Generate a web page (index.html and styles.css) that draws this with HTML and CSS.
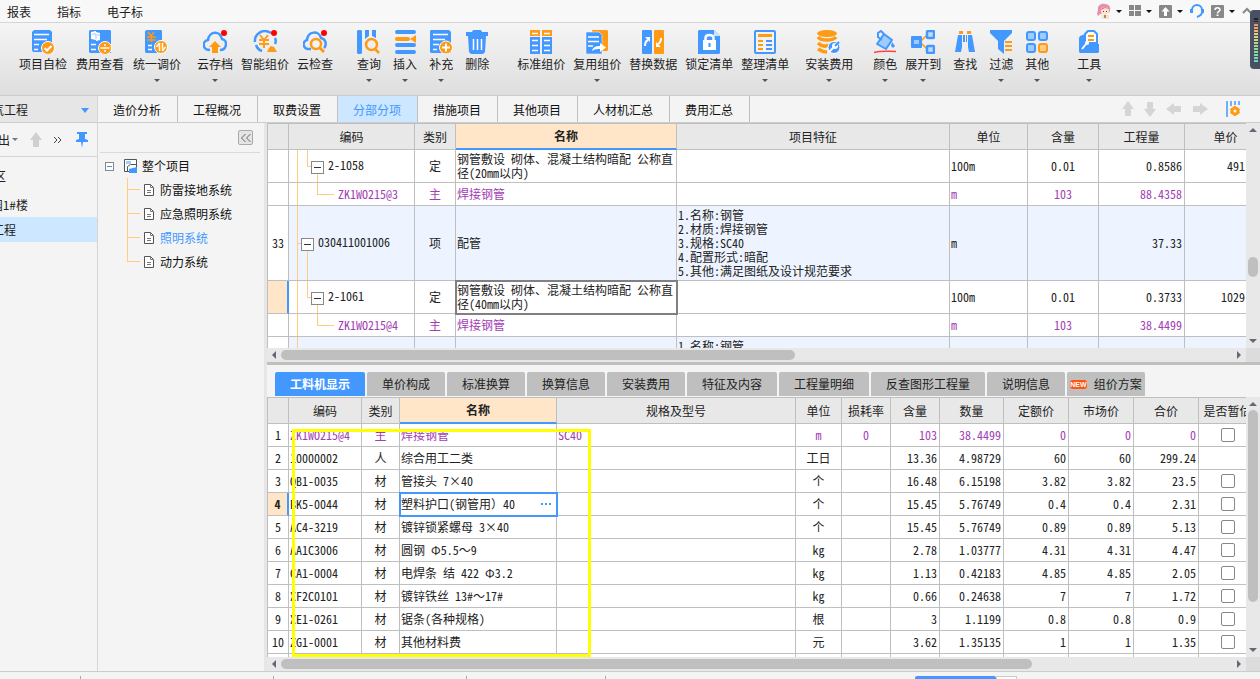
FILE: index.html
```html
<!DOCTYPE html>
<html lang="zh-CN">

<head>
  <meta charset="UTF-8" />
  <meta name="viewport" content="width=device-width, initial-scale=1.0" />
  <title>工程计价 - 分部分项</title>
  <link rel="stylesheet" href="styles.css">
</head>

<body>
  <header class="menubar">
    <nav class="menus">
      <a href="#">报表</a>
      <a href="#">指标</a>
      <a href="#">电子标</a>
    </nav>
    <div class="sysbar">
      <button class="sys drop" aria-label="用户">
        <svg width="14" height="16" viewBox="0 0 14 16"><path d="M1 7C0 3 4 0 8 1c4 0 6 3 5 7l-1 2-9 1-2 2-1-2z" fill="#e98fae" /><circle cx="8" cy="8" r="4" fill="#fbe3cf" /><path d="M4 7c1-3 5-4 8-1l-4-1z" fill="#d9708f" /><path d="M6 8h1v1H6zM9 8h1v1H9z" fill="#633" /><path d="M4 12h8v4H5z" fill="#efe6d8" /><path d="M7 12h2v3H7z" fill="#b88858" /></svg>
      </button>
      <button class="sys drop" aria-label="窗口布局">
        <svg width="12" height="12" viewBox="0 0 12 12" fill="#888"><path d="M0 0h5v5H0zM6 0h6v5H6zM0 6h5v5H0zM6 6h6v5H6z" /></svg>
      </button>
      <button class="sys drop" aria-label="上传">
        <svg width="13" height="13" viewBox="0 0 13 13"><rect width="13" height="13" rx="1" fill="#888" /><path d="M6.500 2l4 4.500H8V11H5V6.500H2.500z" fill="#fff" /></svg>
      </button>
      <button class="sys" aria-label="客服">
        <svg width="14" height="14" viewBox="0 0 14 14" fill="none" stroke="#4398ff" stroke-width="2"><path d="M2 8V6a5 5 0 0 1 10 0v2c0 3-2 4-5 5" /><path d="M1.500 5v4M12.500 5v4" stroke-width="3" /></svg>
      </button>
      <button class="sys drop" aria-label="帮助">
        <svg width="13" height="13" viewBox="0 0 13 13"><rect width="13" height="13" rx="1" fill="#888" /><path d="M4 5c0-3 5-3 5 0 0 1.500-2.500 1.500-2.500 3.500" fill="none" stroke="#fff" stroke-width="1.500" /><path d="M5.500 9.500h2v1.500h-2z" fill="#fff" /></svg>
      </button>
      <button class="sys" aria-label="收起">
        <svg width="10" height="8" viewBox="0 0 10 8" fill="none" stroke="#888" stroke-width="2"><path d="M1 6l4-4 4 4" /></svg>
      </button>
    </div>
  </header>

  <section class="toolbar">
    <div class="group">
      <button class="tool"><svg class="icon" viewBox="0 0 24 24"><path fill="#4398ff" d="M3 0h16l2 2v20H2l-1-2V2z" /><path stroke="#fff" stroke-width="1.500" d="M3 4.500h15M3 9.500h13M3 14.500h5M3 19.500h4" /><circle cx="17" cy="18" r="6.500" fill="#ff9a14" stroke="#fff" /><path d="M13.500 18l2.500 2.500 4.500-4.500" fill="none" stroke="#fff" stroke-width="2" /></svg>项目自检</button>
      <button class="tool"><svg class="icon" viewBox="0 0 24 24"><path fill="#4398ff" d="M2 0h20l1 1v22H2l-1-1V1z" /><path fill="#fff" d="M3 2l5-1v1l4 1v7l-4 1v-1l-5-1z" /><path d="M4 4h4v5M9 5h3" fill="none" stroke="#9fccff" /><path stroke="#fff" stroke-width="1.500" d="M3 14.500h5M3 19.500h5" /><circle cx="17" cy="18" r="6.500" fill="#ff9a14" stroke="#fff" /><path d="M12.500 18h9" stroke="#fff" stroke-width="1.500" /><circle cx="17" cy="15" r="1" fill="#fff" /><circle cx="17" cy="21" r="1" fill="#fff" /></svg>费用查看</button>
      <button class="tool drop"><svg class="icon" viewBox="0 0 24 24"><path fill="#4398ff" d="M2 0h14l1 1v22H1l-1-1V1z" /><path d="M3 2l3 4 3-4M2 7h9M2 10h9M6.500 6v6" fill="none" stroke="#ff9a14" stroke-width="1.500" /><path stroke="#fff" stroke-width="1.500" d="M3 15.500h4M3 19.500h4" /><circle cx="16" cy="17" r="6.500" fill="#ff9a14" stroke="#fff" /><path d="M14.500 13v8M17.500 13v8M14.500 13l-3 4M17.500 21l3-4" fill="none" stroke="#fff" stroke-width="1.500" /></svg>统一调价</button>
    </div>
    <div class="group sp16 tight">
      <button class="tool drop"><svg class="icon" viewBox="0 0 24 24"><path d="M7 20C-1 20-1 11 5 10 6 1 17 0 19 9c6 1 5 11-2 11" fill="none" stroke="#4398ff" stroke-width="2.500" /><path fill="#ff9a14" d="M12 11l6 6h-3v6H9v-6H6z" /><circle cx="21" cy="3" r="3" fill="#f00" /></svg>云存档</button>
      <button class="tool"><svg class="icon" viewBox="0 0 24 24"><path d="M18 3C10-2 1 4 2 12M3 15c1 3 3 5 6 6M22 8c1 2 1 4 0 6" fill="none" stroke="#4398ff" stroke-width="2.500" /><path d="M7 5l4 5 4-5M6 10h10M6 14h10M11 9v9" fill="none" stroke="#ff9a14" stroke-width="2" /><path fill="#ff9a14" d="M14 22l2-4 2-2 3 1 3 5z" /><circle cx="21" cy="3" r="3" fill="#f00" /></svg>智能组价</button>
      <button class="tool"><svg class="icon" viewBox="0 0 24 24"><path d="M8 19C-1 20-1 11 4 10 5 1 16 0 18 8c5 1 6 7 3 10" fill="none" stroke="#4398ff" stroke-width="2.500" /><circle cx="13" cy="14" r="5" fill="#f3f3f3" stroke="#ff9a14" stroke-width="2.500" /><path d="M17 18l4 4" stroke="#ff9a14" stroke-width="3" /><circle cx="21" cy="3" r="3" fill="#f00" /></svg>云检查</button>
    </div>
    <div class="group sp24 wide">
      <button class="tool drop"><svg class="icon" viewBox="0 0 24 24"><path fill="#4398ff" d="M0 1l1-1h3l1 1v22l-1 1H1l-1-1zM8 0h4v6L8 9zM15 0h4v8l-4-2z" /><circle cx="14.500" cy="14.500" r="5.500" fill="none" stroke="#ff9a14" stroke-width="2.500" /><path d="M18 19l4 4" stroke="#ff9a14" stroke-width="2.500" /></svg>查询</button>
      <button class="tool drop"><svg class="icon" viewBox="0 0 24 24"><path stroke="#4398ff" stroke-width="4" stroke-linecap="round" d="M4 2h17M4 15h17M4 22h17" /><path stroke="#ff9a14" stroke-width="4" stroke-linecap="round" d="M4 9h11" /><path fill="#ff9a14" d="M23 5v8l-6-4z" /></svg>插入</button>
      <button class="tool drop"><svg class="icon" viewBox="0 0 24 24"><path fill="#4398ff" d="M2 0h18l2 2v21H2l-1-1V1z" /><path stroke="#fff" stroke-width="1.500" d="M4 4.500h15M4 9.500h12M4 14.500h6M4 19.500h4" /><circle cx="17" cy="17.500" r="6.500" fill="#ff9a14" stroke="#fff" /><path d="M13 17.500h8M17 13.500v8" stroke="#fff" stroke-width="2" /></svg>补充</button>
      <button class="tool"><svg class="icon" viewBox="0 0 24 24"><path fill="#4398ff" d="M8 0h8l1 2h6v4H1V2h6zM3 6h18l-1 16-2 2H6l-2-2z" /><path stroke="#fff" stroke-width="1.500" d="M8.500 9v11M12.500 9v11M16.500 9v11" /></svg>删除</button>
    </div>
    <div class="group sp28 tight">
      <button class="tool"><svg class="icon" viewBox="0 0 24 24"><path fill="#ff9a14" d="M1 0h10v6H1zM13 0h10v6H13z" /><path fill="#4398ff" d="M1 7h10v17H1zM13 7h10v17H13z" /><path stroke="#fff" stroke-width="1.500" d="M3 3.500h6M15 3.500h6M3 10.500h6M15 10.500h6M3 15.500h6M15 15.500h6M3 20.500h6M15 20.500h6" /></svg>标准组价</button>
      <button class="tool drop"><svg class="icon" viewBox="0 0 24 24"><path fill="#ff9a14" d="M7 0h15l1 1v19l-1 1H10z" /><path fill="#4398ff" stroke="#fff" stroke-width=".5" d="M1 2h13l3 3v19H1z" /><path stroke="#fff" stroke-width="1.500" d="M3 7h11M3 11.500h11M3 16h5" /><path fill="#fff" d="M7 21c1-4 4-5 8-5v-3l6 4.500-6 4.500v-3c-3 0-5 0-8 2z" /></svg>复用组价</button>
      <button class="tool"><svg class="icon" viewBox="0 0 24 24"><rect x="1" width="10" height="24" rx="1" fill="#4398ff" /><rect x="13" width="10" height="24" rx="1" fill="#ff9a14" /><path d="M4 16c0-3 1-5 3-6M20 8c0 3-1 5-3 6" fill="none" stroke="#fff" stroke-width="2" /><path fill="#fff" d="M4 7h5v5zM20 17h-5v-5z" /></svg>替换数据</button>
      <button class="tool"><svg class="icon" viewBox="0 0 24 24"><path fill="#4398ff" d="M1 1l1-1h15l6 6v17l-1 1H1z" /><path fill="#cfe5ff" d="M17 0l6 6h-6z" /><path fill="#fff" d="M6 10h13v10H6z" /><path d="M8.500 11V8c0-4 8-4 8 0v3" fill="none" stroke="#fff" stroke-width="2.500" /><path stroke="#4398ff" stroke-width="2" d="M12.500 13v4" /></svg>锁定清单</button>
      <button class="tool drop"><svg class="icon" viewBox="0 0 24 24"><rect x="2" y="1" width="20" height="22" rx="1" fill="#f3f3f3" stroke="#4398ff" stroke-width="2" /><path stroke="#ff9a14" stroke-width="3" d="M5 5.500h14" /><path stroke="#ff9a14" stroke-width="2" d="M5 11h5M5 15h5M5 19h5" /><path stroke="#4398ff" stroke-width="2" d="M13 11h6M13 15h6M13 19h6" /></svg>整理清单</button>
    </div>
    <div class="group sp16">
      <button class="tool drop"><svg class="icon" viewBox="0 0 24 24"><ellipse cx="10" cy="3.500" rx="10" ry="3.500" fill="#ff9a14" /><path d="M1 7c3 4 15 4 18 0M1 13c3 3 7 4 11 2M1 19c3 2 5 3 9 3" fill="none" stroke="#ff9a14" stroke-width="3.500" /><circle cx="17" cy="17.500" r="6" fill="#4398ff" stroke="#fff" /><path d="M12 22l5-5" stroke="#fff" stroke-width="2" /><circle cx="18" cy="16" r="3" fill="#fff" /><path d="M18 16l4-4" stroke="#4398ff" stroke-width="2" /></svg>安装费用</button>
    </div>
    <div class="group sp20 tight">
      <button class="tool drop"><svg class="icon" viewBox="0 0 24 24"><path fill="#9fccff" stroke="#4398ff" stroke-width="2" stroke-linejoin="round" d="M11 4l8 6-6 9-9-5z" /><path d="M9 10L5 7V3l3-2 3 3" fill="none" stroke="#4398ff" stroke-width="2" /><path fill="#4398ff" d="M19 12l3 4-2 2-2-2z" /><path d="M1 22.500c7-2 14-1 22-1" fill="none" stroke="#f44" stroke-width="1.500" /></svg>颜色</button>
      <button class="tool drop"><svg class="icon" viewBox="0 0 24 24"><path d="M9 12l7-7M9 12l7 7" stroke="#ff9a14" stroke-width="1.500" /><rect x="0" y="6" width="11" height="12" rx="1" fill="#4398ff" /><path d="M3 10h5v4H3z" fill="#9fccff" /><rect x="16" y="1" width="7" height="7" rx="1" fill="#bddcff" stroke="#4398ff" stroke-width="2.500" /><rect x="16" y="16" width="7" height="7" rx="1" fill="#bddcff" stroke="#4398ff" stroke-width="2.500" /></svg>展开到</button>
    </div>
    <div class="group sp12 wide">
      <button class="tool"><svg class="icon" viewBox="0 0 24 24"><path fill="#ff9a14" d="M6 1h4v3H6zM14 1h4v3h-4z" /><path fill="#4398ff" d="M5 5h4v12l-1 5H2zM15 5h4l3 17h-6l-1-5zM10 5h2v7h-2zM13 5h1v7h-1z" /></svg>查找</button>
      <button class="tool drop"><svg class="icon" viewBox="0 0 24 24"><path fill="#4398ff" d="M1 0h22v3l-8 8v13l-6-5v-8L1 3z" /><path stroke="#ff9a14" stroke-width="2" d="M16 12h7M16 16h7M16 20h7" /></svg>过滤</button>
      <button class="tool drop"><svg class="icon" viewBox="0 0 24 24" fill="#9fccff" stroke="#4398ff" stroke-width="2"><rect x="2" y="2" width="8" height="8" rx="2" /><rect x="14" y="2" width="8" height="8" rx="2" /><rect x="2" y="14" width="8" height="8" rx="2" /><rect x="14" y="14" width="8" height="8" rx="2" fill="#ffcf8a" stroke="#ff9a14" /></svg>其他</button>
    </div>
    <div class="group sp28">
      <button class="tool drop"><svg class="icon" viewBox="0 0 24 24"><path d="M8 10V4l3-3h6l3 3v9H8z" fill="#fff" stroke="#4398ff" stroke-width="2" /><path stroke="#ff9a14" stroke-width="2" d="M11 6h6M11 10h6" /><path fill="#4398ff" d="M3 6l5-2v8h5l1 2h8v8l-1 1H3l-1-1V8z" /><path d="M5 19l4-5" fill="none" stroke="#fff" stroke-width="2" /><circle cx="10" cy="13" r="2" fill="#fff" /></svg>工具</button>
    </div>
  </section>

  <main class="workspace">
    <aside class="projects">
      <button class="project-pick"><span class="cut w28">电气工程</span><span class="tri"></span></button>
      <div class="project-tools">
        <button class="cut w10">导出</button>
        <span class="mini"></span>
        <svg width="12" height="16" viewBox="0 0 12 16" fill="#d0d0d0"><path d="M6 0l6 8H9v7H3V8H0z" /></svg>
        <button class="more" aria-label="更多"><svg width="8" height="8" viewBox="0 0 8 8" fill="none" stroke="#444"><path d="M0 1l3 3-3 3M4 1l3 3-3 3" /></svg></button>
        <svg class="pin" width="12" height="16" viewBox="0 0 12 16" fill="#4398ff"><path d="M1 0h10v2H9v5l3 1v2H7l-1 6-1-6H0V8l3-1V2H1z" /></svg>
      </div>
      <ul class="project-list">
        <li><span class="cut w6">小区</span></li>
        <li><span class="cut w28">花园1#楼</span></li>
        <li class="on"><span class="cut w16">电气工程</span></li>
      </ul>
    </aside>

    <div class="right">
      <nav class="tabs">
        <button>造价分析</button>
        <button>工程概况</button>
        <button>取费设置</button>
        <button class="on">分部分项</button>
        <button>措施项目</button>
        <button>其他项目</button>
        <button>人材机汇总</button>
        <button>费用汇总</button>
        <div class="moves">
          <svg width="12" height="16" viewBox="0 0 12 16"><path d="M6 0l6 8H9v7H3V8H0z" /></svg>
          <svg width="12" height="16" viewBox="0 0 12 16"><path d="M6 16l6-8H9V1H3v7H0z" /></svg>
          <svg width="16" height="12" viewBox="0 0 16 12"><path d="M0 6l8-6v3h7v6H8v3z" /></svg>
          <svg width="16" height="12" viewBox="0 0 16 12"><path d="M16 6l-8-6v3H1v6h7v3z" /></svg>
          <svg class="setup" width="14" height="16" viewBox="0 0 14 16"><path stroke="#4398ff" stroke-width="1.500" d="M1 0v16M5 0v5M9 0v4M13 0v4" /><circle cx="9" cy="10" r="3" fill="none" stroke="#ff9a14" stroke-width="3" /><path stroke="#ff9a14" stroke-width="2" d="M9 5v2M9 13v2M4.500 8l2 1M13.500 8l-2 1M4.500 12l2-1M13.500 12l-2-1" /></svg>
        </div>
      </nav>

      <div class="panes">
        <aside class="tree">
          <div class="tree-head"><button class="fold" aria-label="折叠"><svg width="10" height="10" viewBox="0 0 10 10" fill="none" stroke="#666"><path d="M4.500 1l-4 4 4 4M9.500 1l-4 4 4 4" /></svg></button></div>
          <div class="root">
            <button class="box" aria-label="收起"></button>
            <svg width="14" height="14" viewBox="0 0 14 14"><path d="M.5.500h12v12h-12z" fill="#fff" stroke="#555" /><path d="M2 2h5v3H2z" fill="#9fccff" /><path d="M3.500 13V7.500l3-2H12" fill="none" stroke="#555" /><path d="M5 14v-4l8-2v6z" fill="#4398ff" /></svg>
            整个项目
          </div>
          <ul>
            <li><svg class="doc" viewBox="0 0 10 12"><path d="M.5.500h6l3 3v8h-9z" fill="#fff" stroke="#555" /><path d="M6.500.500v3h3M3 6.500h4M3 8.500h4" fill="none" stroke="#777" /></svg>防雷接地系统</li>
            <li><svg class="doc" viewBox="0 0 10 12"><path d="M.5.500h6l3 3v8h-9z" fill="#fff" stroke="#555" /><path d="M6.500.500v3h3M3 6.500h4M3 8.500h4" fill="none" stroke="#777" /></svg>应急照明系统</li>
            <li class="on"><svg class="doc" viewBox="0 0 10 12"><path d="M.5.500h6l3 3v8h-9z" fill="#fff" stroke="#555" /><path d="M6.500.500v3h3M3 6.500h4M3 8.500h4" fill="none" stroke="#777" /></svg>照明系统</li>
            <li><svg class="doc" viewBox="0 0 10 12"><path d="M.5.500h6l3 3v8h-9z" fill="#fff" stroke="#555" /><path d="M6.500.500v3h3M3 6.500h4M3 8.500h4" fill="none" stroke="#777" /></svg>动力系统</li>
          </ul>
        </aside>

        <div class="grids">
          <!-- 分部分项清单 -->
          <section class="grid grid-top">
            <div class="view">
              <table class="list">
                <colgroup>
                  <col class="c21"><col class="c126"><col class="c41"><col class="c221"><col class="c273"><col class="c78"><col class="c71"><col class="c86"><col class="c82">
                </colgroup>
                <thead>
                  <tr><th></th><th>编码</th><th>类别</th><th class="key">名称</th><th>项目特征</th><th>单位</th><th>含量</th><th>工程量</th><th>单价</th></tr>
                </thead>
                <tbody>
                  <tr class="two">
                    <td></td><td class="lv2"><button class="minus" aria-label="收起"></button>2-1058</td><td class="c">定</td><td>钢管敷设 砌体、混凝土结构暗配 公称直径(20mm以内)</td><td></td><td>100m</td><td class="c">0.01</td><td class="r">0.8586</td><td class="r edge">491</td>
                  </tr>
                  <tr class="main">
                    <td></td><td class="lv3">ZK1WO215@3</td><td class="c">主</td><td>焊接钢管</td><td></td><td>m</td><td class="c">103</td><td class="r">88.4358</td><td></td>
                  </tr>
                  <tr class="item">
                    <td class="c">33</td><td class="lv1"><button class="minus" aria-label="收起"></button>030411001006</td><td class="c">项</td><td>配管</td><td>1.名称:钢管<br>2.材质:焊接钢管<br>3.规格:SC40<br>4.配置形式:暗配<br>5.其他:满足图纸及设计规范要求</td><td>m</td><td></td><td class="r">37.33</td><td></td>
                  </tr>
                  <tr class="two">
                    <td class="cur"></td><td class="lv2"><button class="minus" aria-label="收起"></button>2-1061</td><td class="c">定</td><td class="picked">钢管敷设 砌体、混凝土结构暗配 公称直径(40mm以内)</td><td></td><td>100m</td><td class="c">0.01</td><td class="r">0.3733</td><td class="r edge">1029</td>
                  </tr>
                  <tr class="main">
                    <td></td><td class="lv3">ZK1WO215@4</td><td class="c">主</td><td>焊接钢管</td><td></td><td>m</td><td class="c">103</td><td class="r">38.4499</td><td></td>
                  </tr>
                  <tr class="item">
                    <td></td><td class="lv0"></td><td></td><td></td><td>1.名称:钢管<br>2.材质:焊接钢管<br>3.规格:SC50<br>4.配置形式:暗配<br>5.其他:满足图纸及设计规范要求</td><td></td><td></td><td></td><td></td>
                  </tr>
                </tbody>
              </table>
            </div>
            <div class="vbar"><i class="up"></i><div class="track"><b class="mid"></b></div><i class="down"></i></div>
            <div class="hbar"><i class="left"></i><div class="track"><b class="w55"></b></div><i class="next"></i></div>
            <div class="corner"></div>
          </section>

          <!-- 工料机 -->
          <section class="detail">
            <nav class="subtabs">
              <button class="on w90">工料机显示</button>
              <button>单价构成</button>
              <button>标准换算</button>
              <button>换算信息</button>
              <button>安装费用</button>
              <button class="w90">特征及内容</button>
              <button class="w90">工程量明细</button>
              <button class="w114">反查图形工程量</button>
              <button>说明信息</button>
              <button><span class="new">NEW</span>组价方案</button>
            </nav>
            <div class="grid">
              <div class="view">
                <table class="list res">
                  <colgroup>
                    <col class="c21"><col class="c73"><col class="c38"><col class="c157"><col class="c239"><col class="c46"><col class="c49"><col class="c49"><col class="c64"><col class="c65"><col class="c65"><col class="c65"><col class="c58">
                  </colgroup>
                  <thead>
                    <tr><th></th><th>编码</th><th>类别</th><th class="key">名称</th><th>规格及型号</th><th>单位</th><th>损耗率</th><th>含量</th><th>数量</th><th>定额价</th><th>市场价</th><th>合价</th><th>是否暂估</th></tr>
                  </thead>
                  <tbody>
                    <tr class="main"><td>1</td><td>ZK1WO215@4</td><td>主</td><td>焊接钢管</td><td>SC40</td><td>m</td><td>0</td><td>103</td><td>38.4499</td><td>0</td><td>0</td><td>0</td><td><input type="checkbox" aria-label="暂估 1"></td></tr>
                    <tr><td>2</td><td>10000002</td><td>人</td><td>综合用工二类</td><td></td><td>工日</td><td></td><td>13.36</td><td>4.98729</td><td>60</td><td>60</td><td>299.24</td><td></td></tr>
                    <tr><td>3</td><td>QB1-0035</td><td>材</td><td>管接头 7×40</td><td></td><td>个</td><td></td><td>16.48</td><td>6.15198</td><td>3.82</td><td>3.82</td><td>23.5</td><td><input type="checkbox" aria-label="暂估 3"></td></tr>
                    <tr><td class="cur">4</td><td>BK5-0044</td><td>材</td><td class="edit"><div><span>塑料护口(钢管用<span class="full">）</span>40</span><button aria-label="选择"><svg width="11" height="2" viewBox="0 0 11 2" fill="#4398ff"><path d="M0 0h2v2H0zM4 0h2v2H4zM8 0h2v2H8z" /></svg></button></div></td><td></td><td>个</td><td></td><td>15.45</td><td>5.76749</td><td>0.4</td><td>0.4</td><td>2.31</td><td><input type="checkbox" aria-label="暂估 4"></td></tr>
                    <tr><td>5</td><td>AC4-3219</td><td>材</td><td>镀锌锁紧螺母 3×40</td><td></td><td>个</td><td></td><td>15.45</td><td>5.76749</td><td>0.89</td><td>0.89</td><td>5.13</td><td><input type="checkbox" aria-label="暂估 5"></td></tr>
                    <tr><td>6</td><td>AA1C3006</td><td>材</td><td>圆钢 Φ5.5<span class="full">～</span>9</td><td></td><td>kg</td><td></td><td>2.78</td><td>1.03777</td><td>4.31</td><td>4.31</td><td>4.47</td><td><input type="checkbox" aria-label="暂估 6"></td></tr>
                    <tr><td>7</td><td>CA1-0004</td><td>材</td><td>电焊条 结 422 Φ3.2</td><td></td><td>kg</td><td></td><td>1.13</td><td>0.42183</td><td>4.85</td><td>4.85</td><td>2.05</td><td><input type="checkbox" aria-label="暂估 7"></td></tr>
                    <tr><td>8</td><td>XF2C0101</td><td>材</td><td>镀锌铁丝 13#<span class="full">～</span>17#</td><td></td><td>kg</td><td></td><td>0.66</td><td>0.24638</td><td>7</td><td>7</td><td>1.72</td><td><input type="checkbox" aria-label="暂估 8"></td></tr>
                    <tr><td>9</td><td>XE1-0261</td><td>材</td><td>锯条(各种规格)</td><td></td><td>根</td><td></td><td>3</td><td>1.1199</td><td>0.8</td><td>0.8</td><td>0.9</td><td><input type="checkbox" aria-label="暂估 9"></td></tr>
                    <tr><td>10</td><td>ZG1-0001</td><td>材</td><td>其他材料费</td><td></td><td>元</td><td></td><td>3.62</td><td>1.35135</td><td>1</td><td>1</td><td>1.35</td><td><input type="checkbox" aria-label="暂估 10"></td></tr>
                    <tr><td></td><td></td><td></td><td></td><td></td><td></td><td></td><td></td><td></td><td></td><td></td><td></td><td></td></tr>
                  </tbody>
                </table>
              </div>
              <div class="vbar"><i class="up"></i><div class="track"><b class="h82"></b></div><i class="down"></i></div>
              <div class="hbar"><i class="left"></i><div class="track"><b class="w79"></b></div><i class="next"></i></div>
              <div class="corner"></div>
              <div class="mark"></div>
            </div>
          </section>
        </div>
      </div>
    </div>
  </main>

  <footer class="status"><span class="s81"></span><span></span><span></span><span class="s139"></span><b></b><em></em></footer>

  <div class="meter"><span></span></div>
</body>

</html>
```
FILE: styles.css
```css
* {
  box-sizing: border-box;
}

body {
  display: flex;
  flex-direction: column;
  height: 100vh;
  margin: 0;
  overflow: hidden;
  background: #f4f4f4;
  color: #222;
  font: 12px/16px "Noto Sans CJK SC", sans-serif;
}

button {
  padding: 0;
  border: 0;
  background: none;
  color: inherit;
  font: inherit;
  white-space: nowrap;
}

ul {
  margin: 0;
  padding: 0;
  list-style: none;
}

svg {
  display: block;
  flex: none;
}

/* menu */
.menubar {
  display: flex;
  flex: none;
  justify-content: space-between;
  height: 23px;
  padding: 0 8px 0 7px;
  border-bottom: 1px solid #d5d5d5;
  background: #f8f8f8;
}

.menus,
.sysbar {
  display: flex;
  align-items: center;
}

.menus {
  gap: 26px;
  padding-top: 2px;
}

.menus a {
  color: inherit;
  text-decoration: none;
}

.sysbar {
  gap: 7px;
}

.sys {
  display: flex;
  align-items: center;
  gap: 5px;
}

.sys.drop::after {
  border: 3px solid transparent;
  border-top-color: #111;
  border-bottom: 0;
  content: "";
}

/* toolbar */
.toolbar {
  display: flex;
  flex: none;
  height: 73px;
  padding: 7px 0 0 19px;
  border-bottom: 1px solid #ccc;
  background: linear-gradient(#f5f5f5, #dedede);
}

.group {
  display: flex;
  gap: 9px;
  align-items: flex-start;
}

.tight {
  gap: 8px;
}

.wide {
  gap: 12px;
}

.sp12 {
  margin-left: 12px;
}

.sp16 {
  margin-left: 16px;
}

.sp20 {
  margin-left: 20px;
}

.sp24 {
  margin-left: 24px;
}

.sp28 {
  margin-left: 28px;
}

.tool {
  display: flex;
  flex-direction: column;
  align-items: center;
}

.icon {
  width: 24px;
  height: 24px;
  margin-bottom: 2px;
}

.tool.drop::after {
  margin-top: 7px;
  border: 3px solid transparent;
  border-top-color: #555;
  border-bottom: 0;
  content: "";
}

/* left project panel */
.workspace {
  display: flex;
  flex: 1;
  min-height: 0;
}

.projects {
  flex: none;
  width: 98px;
  border-right: 1px solid #d5d5d5;
}

.cut {
  display: flex;
  justify-content: flex-end;
  overflow: hidden;
  white-space: nowrap;
}

.w6 {
  width: 6px;
}

.w10 {
  width: 10px;
}

.w16 {
  width: 16px;
}

.w28 {
  width: 28px;
}

.project-pick {
  display: flex;
  align-items: center;
  justify-content: space-between;
  width: 100%;
  height: 27px;
  padding: 2px 8px 0 0;
  border-bottom: 1px solid #ccc;
  background: #e6e6e6;
}

.tri {
  border: 4px solid transparent;
  border-top: 5px solid #4398ff;
  border-bottom: 0;
}

.project-tools {
  display: flex;
  align-items: center;
  height: 34px;
  padding-right: 9px;
  border-bottom: 1px solid #d5d5d5;
}

.mini {
  margin: 0 12px 0 2px;
  border: 3px solid transparent;
  border-top-color: #777;
  border-bottom: 0;
}

.more {
  margin-left: 12px;
}

.pin {
  margin-left: auto;
}

.project-list {
  padding-top: 6px;
}

.project-list li {
  display: flex;
  align-items: center;
  height: 25px;
  margin-bottom: 4px;
}

.project-list li + li {
  margin-bottom: 0;
}

.project-list .on {
  background: #cce7ff;
}

/* main tabs */
.right {
  display: flex;
  flex: 1;
  flex-direction: column;
  min-width: 0;
}

.tabs {
  display: flex;
  flex: none;
  height: 27px;
  border-bottom: 1px solid #ccc;
}

.tabs button {
  padding: 2px 16px 0 15px;
  border-right: 1px solid #bfbfbf;
  color: #111;
}

.tabs .on {
  background: #cce7ff;
  color: #4398ff;
}

.moves {
  display: flex;
  gap: 10px;
  align-items: center;
  margin-left: auto;
  padding-right: 20px;
  fill: #d5d5d5;
}

.setup {
  margin-left: 8px;
}

.panes {
  display: flex;
  flex: 1;
  min-height: 0;
}

/* tree */
.tree {
  flex: none;
  width: 169px;
  padding: 0 4px 0 2px;
  border-right: 3px solid #e6e6e6;
}

.tree-head {
  display: flex;
  align-items: center;
  justify-content: flex-end;
  height: 30px;
  padding-right: 7px;
  border-bottom: 1px solid #d9d9d9;
}

.fold {
  display: flex;
  align-items: center;
  justify-content: center;
  width: 15px;
  height: 15px;
  border: 1px solid #aaa;
  border-radius: 2px;
  background: #e4e4e4;
}

.root {
  display: flex;
  align-items: center;
  height: 24px;
  margin-top: 1px;
  padding-left: 5px;
  color: #111;
}

.root svg {
  margin: 0 4px 0 10px;
}

.box,
.minus {
  flex: none;
  width: 9px;
  height: 9px;
  border: 1px solid #888;
  background: linear-gradient(#3a9ad9, #3a9ad9) center / 5px 1px no-repeat #fff;
}

.tree li {
  display: flex;
  gap: 6px;
  align-items: center;
  height: 24px;
  padding-left: 44px;
  background:
    linear-gradient(#ffcc80, #ffcc80) 27px 0 / 1px 100% no-repeat,
    linear-gradient(#ffcc80, #ffcc80) 27px 11px / 13px 1px no-repeat;
  color: #111;
}

.tree li:last-child {
  background-size: 1px 12px, 13px 1px;
}

.tree .on {
  color: #4398ff;
}

.doc {
  width: 10px;
  height: 12px;
}

/* grids */
.grids {
  display: flex;
  flex: 1;
  flex-direction: column;
  min-width: 0;
}

.grid {
  position: relative;
  display: grid;
  flex: 1;
  grid-template: minmax(0, 1fr) 14px / minmax(0, 1fr) 14px;
  min-height: 0;
}

.grid-top {
  flex: 239 1 0;
  border-bottom: 3px solid #bfbfbf;
}

.detail {
  display: flex;
  flex: 306 1 0;
  flex-direction: column;
  min-height: 0;
}

.view {
  overflow: hidden;
  border-top: 1px solid #bfbfbf;
  border-left: 1px solid #bfbfbf;
  background: #fff;
}

.list {
  width: 0;
  border-spacing: 0;
  table-layout: fixed;
  line-height: 14px;
  font-feature-settings: "hwid";
}

.full {
  font-feature-settings: normal;
}

.c21 { width: 21px; }
.c38 { width: 38px; }
.c41 { width: 41px; }
.c46 { width: 46px; }
.c49 { width: 49px; }
.c58 { width: 58px; }
.c64 { width: 64px; }
.c65 { width: 65px; }
.c71 { width: 71px; }
.c73 { width: 73px; }
.c78 { width: 78px; }
.c82 { width: 82px; }
.c86 { width: 86px; }
.c126 { width: 126px; }
.c157 { width: 157px; }
.c221 { width: 221px; }
.c239 { width: 239px; }
.c273 { width: 273px; }

.list th,
.list td {
  height: 23px;
  padding: 0 1px;
  border-right: 1px solid #bfbfbf;
  border-bottom: 1px solid #bfbfbf;
}

.list th {
  height: 26px;
  background: #e8e8e8;
  font-weight: normal;
  white-space: nowrap;
}

.list .key {
  border-bottom: 2px solid #4398ff;
  background: #ffe6c8;
  font-weight: bold;
}

.list .two td {
  height: 33px;
}

.list .item td {
  height: 75px;
  background-color: #edf4ff;
}

.list .item td:first-child {
  background-color: #fff;
}

.list .main td {
  color: #a33db3;
}

.list .main td:first-child {
  color: #222;
}

.list .c {
  text-align: center;
}

.list .r {
  padding-right: 2px;
  text-align: right;
}

.list .edge {
  padding-right: 21px;
}

.list .cur {
  border-right: 2px solid #4398ff;
  background: #ffe6c8;
  font-weight: bold;
}

.list .picked {
  outline: 2px solid #808080;
  outline-offset: -1px;
}

/* outline lines of the code column */
.minus {
  width: 13px;
  height: 13px;
  margin-right: 4px;
  background: linear-gradient(#333, #333) center / 7px 1px no-repeat #fff;
  vertical-align: middle;
}

.lv0,
.lv1,
.lv2,
.lv3 {
  background-image: linear-gradient(#ffcc80, #ffcc80), linear-gradient(#ffcc80, #ffcc80), linear-gradient(#ffcc80, #ffcc80), linear-gradient(#ffcc80, #ffcc80);
  background-repeat: no-repeat;
}

.lv0 {
  background-size: 1px 100%, 0 0, 0 0, 0 0;
  background-position: 8px 0;
}

.list .lv1 {
  padding-left: 12px;
  background-size: 1px 100%, 4px 1px, 1px 50%, 0 0;
  background-position: 8px 0, 8px 50%, 18px 100%, 0 0;
}

.list .lv2 {
  padding-left: 22px;
  background-size: 1px 100%, 1px 50%, 5px 1px, 1px 50%;
  background-position: 8px 0, 18px 0, 18px 50%, 28px 100%;
}

.list .lv3 {
  padding-left: 49px;
  background-size: 1px 100%, 1px 50%, 17px 1px, 0 0;
  background-position: 8px 0, 28px 0, 28px 50%, 0 0;
}

/* resource table */
.res td:nth-child(1),
.res td:nth-child(3),
.res td:nth-child(6),
.res td:nth-child(7),
.res td:nth-child(13) {
  text-align: center;
}

.res td:nth-child(n + 8):nth-child(-n + 12) {
  padding-right: 2px;
  text-align: right;
}

.edit {
  outline: 2px solid #4398ff;
  outline-offset: -1px;
}

.edit div {
  display: flex;
  align-items: center;
  justify-content: space-between;
}

.edit button {
  padding-right: 3px;
}

.res input {
  display: block;
  width: 14px;
  height: 14px;
  margin: 0 auto;
  border: 1px solid #888;
  border-radius: 2px;
  background: #fff;
  appearance: none;
}

/* scroll bars */
.vbar,
.hbar {
  display: flex;
  align-items: center;
  background: #e8e8e8;
}

.vbar {
  flex-direction: column;
  padding: 5px 0;
}

.hbar {
  padding: 0 5px;
}

.corner {
  background: #dcdcdc;
}

.vbar .track {
  flex: 1;
  width: 10px;
  margin: 4px 0;
}

.hbar .track {
  flex: 1;
  height: 10px;
  margin: 0 5px;
}

.track b {
  display: block;
  height: 100%;
  border-radius: 5px;
  background: #bfbfbf;
}

.track .w55 {
  width: 54%;
}

.track .w79 {
  width: 79%;
}

.track .h82 {
  height: 82%;
}

.vbar .track:has(.mid) {
  display: grid;
  grid-template-rows: 61% 10%;
}

.track .mid {
  grid-row: 2;
}

.up,
.down,
.left,
.next {
  border: 4px solid transparent;
}

.up {
  border-top: 0;
  border-bottom-color: #667;
}

.down {
  border-top-color: #667;
  border-bottom: 0;
}

.left {
  border-right-color: #667;
  border-left: 0;
}

.next {
  border-right: 0;
  border-left-color: #667;
}

/* lower tabs */
.subtabs {
  display: flex;
  flex: none;
  gap: 2px;
  height: 32px;
  padding: 7px 0 1px 8px;
}

.subtabs button {
  display: flex;
  align-items: center;
  justify-content: center;
  width: 78px;
  border-radius: 2px 2px 0 0;
  background: #bfbfbf;
}

.subtabs .w90 {
  width: 90px;
}

.subtabs .w114 {
  width: 114px;
}

.subtabs .on {
  background: #4398ff;
  color: #fff;
  font-weight: bold;
}

.new {
  margin-right: 7px;
  border-radius: 3px;
  background: #ff5510;
  color: #fff;
  font: bold 7px/9px "Liberation Sans", sans-serif;
}

/* highlighted block over the resource table */
.mark {
  position: absolute;
  top: 32px;
  bottom: 14px;
  left: 25px;
  width: 299px;
  border: 3px solid #ff0;
}

.status {
  display: flex;
  flex: none;
  align-items: flex-end;
  height: 8px;
  border-top: 1px solid #ccc;
}

.status span {
  width: 193px;
  height: 3px;
  border-right: 1px solid #aaa;
}

.status .s81 {
  width: 81px;
}

.status .s139 {
  width: 139px;
}

.status b {
  width: 81px;
  height: 3px;
  margin-left: 309px;
  border-radius: 2px 2px 0 0;
  background: #4398ff;
}

.status em {
  width: 21px;
  height: 3px;
  border: 1px solid #ccc;
  border-bottom: 0;
  background: #fff;
}

/* floating level meter at the window edge */
.meter {
  position: absolute;
  top: 10px;
  right: 0;
  width: 10px;
  height: 59px;
  padding: 7px 2px 7px 4px;
  border-radius: 4px 0 0 4px;
  background: #4a5063;
}

.meter span {
  display: block;
  height: 100%;
  background:
    repeating-linear-gradient(#4a5063 0 1px, transparent 1px 3px),
    linear-gradient(#222 0 5px, #e88a6a 6px, #e8d070 18px, #9ad890 30px, #6ad8c0 45px);
}
```
